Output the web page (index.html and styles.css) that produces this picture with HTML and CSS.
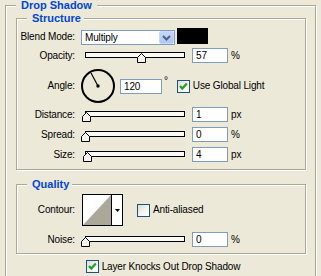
FILE: index.html
```html
<!DOCTYPE html>
<html>
<head>
<meta charset="utf-8">
<link rel="stylesheet" href="styles.css">
</head>
<body>
<section class="group outer">
  <h1 class="caption">Drop Shadow</h1>

  <section class="group sub structure">
    <h2 class="caption sub-caption">Structure</h2>

    <div class="row row-blend">
      <span class="lbl">Blend Mode:</span>
      <div class="ctl">
        <div class="combo">
          <span class="combo-text">Multiply</span>
          <span class="combo-btn"><svg width="9" height="6" viewBox="0 0 9 6"><polyline points="1,1 4.5,4.5 8,1" fill="none" stroke="#4D6185" stroke-width="2"/></svg></span>
        </div>
        <span class="swatch"></span>
      </div>
    </div>

    <div class="row row-opacity">
      <span class="lbl">Opacity:</span>
      <div class="ctl">
        <div class="slider"><span class="thumb" style="left:57%"><svg width="9" height="10" viewBox="0 0 9 10"><polygon points="4.5,0.5 8.5,4.5 8.5,9.5 0.5,9.5 0.5,4.5" fill="#F3F2EC" stroke="#000" stroke-width="1"/></svg></span></div>
        <input class="field" type="text" value="57">
        <span class="unit">%</span>
      </div>
    </div>

    <div class="row row-angle">
      <span class="lbl">Angle:</span>
      <div class="ctl ctl-center">
        <svg class="dial" width="36" height="36" viewBox="0 0 36 36">
          <circle cx="17" cy="18" r="16" fill="none" stroke="#000" stroke-width="2"/>
          <line x1="17" y1="18" x2="10" y2="5" stroke="#000" stroke-width="1.2"/>
          <circle cx="17" cy="18" r="1.7" fill="#000"/>
        </svg>
        <input class="field field-angle" type="text" value="120">
        <span class="deg">°</span>
        <label class="check-label check-global">
          <span class="check"><svg width="11" height="11" viewBox="0 0 11 11"><polyline points="2,5 4.3,7.5 8.8,2.5" fill="none" stroke="#21A121" stroke-width="2.2"/></svg></span>
          <span class="check-text">Use Global Light</span>
        </label>
      </div>
    </div>

    <div class="row row-distance">
      <span class="lbl">Distance:</span>
      <div class="ctl">
        <div class="slider"><span class="thumb" style="left:1%"><svg width="9" height="10" viewBox="0 0 9 10"><polygon points="4.5,0.5 8.5,4.5 8.5,9.5 0.5,9.5 0.5,4.5" fill="#F3F2EC" stroke="#000" stroke-width="1"/></svg></span></div>
        <input class="field" type="text" value="1">
        <span class="unit">px</span>
      </div>
    </div>

    <div class="row row-spread">
      <span class="lbl">Spread:</span>
      <div class="ctl">
        <div class="slider"><span class="thumb" style="left:0%"><svg width="9" height="10" viewBox="0 0 9 10"><polygon points="4.5,0.5 8.5,4.5 8.5,9.5 0.5,9.5 0.5,4.5" fill="#F3F2EC" stroke="#000" stroke-width="1"/></svg></span></div>
        <input class="field" type="text" value="0">
        <span class="unit">%</span>
      </div>
    </div>

    <div class="row row-size">
      <span class="lbl">Size:</span>
      <div class="ctl">
        <div class="slider"><span class="thumb" style="left:2%"><svg width="9" height="10" viewBox="0 0 9 10"><polygon points="4.5,0.5 8.5,4.5 8.5,9.5 0.5,9.5 0.5,4.5" fill="#F3F2EC" stroke="#000" stroke-width="1"/></svg></span></div>
        <input class="field" type="text" value="4">
        <span class="unit">px</span>
      </div>
    </div>
  </section>

  <section class="group sub quality">
    <h2 class="caption sub-caption">Quality</h2>

    <div class="row row-contour">
      <span class="lbl">Contour:</span>
      <div class="ctl ctl-center">
        <div class="contour">
          <svg class="contour-preview" width="28" height="30" viewBox="0 0 28 30"><polygon points="0,30 28,0 28,30" fill="#ACA899"/></svg>
          <span class="contour-arrow"><svg width="5" height="3" viewBox="0 0 5 3"><polygon points="0,0 5,0 2.5,3" fill="#000"/></svg></span>
        </div>
        <label class="check-label check-anti">
          <span class="check"></span>
          <span class="check-text">Anti-aliased</span>
        </label>
      </div>
    </div>

    <div class="row row-noise">
      <span class="lbl">Noise:</span>
      <div class="ctl">
        <div class="slider"><span class="thumb" style="left:0%"><svg width="9" height="10" viewBox="0 0 9 10"><polygon points="4.5,0.5 8.5,4.5 8.5,9.5 0.5,9.5 0.5,4.5" fill="#F3F2EC" stroke="#000" stroke-width="1"/></svg></span></div>
        <input class="field" type="text" value="0">
        <span class="unit">%</span>
      </div>
    </div>
  </section>

  <div class="row-layer">
    <label class="check-label">
      <span class="check"><svg width="11" height="11" viewBox="0 0 11 11"><polyline points="2,5 4.3,7.5 8.8,2.5" fill="none" stroke="#21A121" stroke-width="2.2"/></svg></span>
      <span class="check-text">Layer Knocks Out Drop Shadow</span>
    </label>
  </div>
</section>
</body>
</html>
```

FILE: styles.css
```css
* { box-sizing: border-box; }
html, body { margin: 0; padding: 0; }
body {
  background: #ECE9D8;
  font-family: "Liberation Sans", Arial, sans-serif;
  font-size: 10px;
  letter-spacing: -0.15px;
  color: #000;
  width: 321px;
  height: 276px;
  overflow: hidden;
}

.group {
  border: 1px solid #ACA899;
  box-shadow: inset 1px 1px 0 #fff, 1px 1px 0 #fff;
}
.outer {
  margin: 5px 5px 0;
  padding: 0 9px 14px 10px;
}
.caption {
  display: block;
  width: max-content;
  margin: -6px 0 0 0;
  padding: 0 5px;
  font-weight: bold;
  font-size: 11px;
  letter-spacing: 0;
  line-height: 11px;
  color: #0046D5;
  background: #ECE9D8;
}
.sub-caption {
  margin: -6px 0 4px 10px;
  padding: 0 3px 0 5px;
}
.structure { margin-top: 7px; padding: 0 0 7px 0; }
.quality { margin-top: 14px; padding: 0 0 6px 0; }

.row {
  display: grid;
  grid-template-columns: 58px auto;
  column-gap: 6px;
  align-items: center;
  height: 15px;
  margin-top: 5px;
}
.lbl { text-align: right; white-space: nowrap; line-height: 12px; }
.ctl { display: flex; align-items: flex-start; height: 100%; }
.ctl-center { align-items: center; }

.row-blend { height: 17px; margin-top: 0; }
.row-opacity { margin-top: 3px; }
.row-angle { height: 36px; margin-top: 5px; }
.row-distance { margin-top: 3px; }
.row-contour { height: 32px; margin-top: 0; }
.row-noise { margin-top: 6px; }

/* combo */
.combo {
  margin-top: 2px;
  width: 94px;
  height: 15px;
  border: 1px solid #7F9DB9;
  background: #fff;
  display: flex;
  align-items: center;
}
.combo-text { flex: 1; padding-left: 3px; line-height: 13px; }
.combo-btn {
  width: 15px;
  height: 13px;
  border-radius: 2px;
  border: 1px solid #C9D8FA;
  background: linear-gradient(#C6D6FB, #B0C6F5);
  display: flex;
  align-items: center;
  justify-content: center;
}
.swatch { width: 31px; height: 16px; background: #000; margin-left: 2px; }

/* slider */
.slider {
  position: relative;
  margin: 4px 7px 0 4px;
  width: 100px;
  height: 6px;
  border: 1px solid #000;
  background: #FAF9F2;
}
.thumb {
  position: absolute;
  top: 0;
  margin-left: -5px;
  width: 9px;
  height: 10px;
  display: block;
}
.thumb svg { display: block; }

.field {
  margin: 0;
  width: 36px;
  height: 15px;
  border: 1px solid #7F9DB9;
  background: #fff;
  padding: 0 0 0 3px;
  font: inherit;
  letter-spacing: inherit;
  line-height: 13px;
  color: #000;
  outline: none;
}
.unit { margin-left: 3px; line-height: 15px; }

/* angle */
.dial { display: block; flex: none; }
.field-angle { width: 42px; margin-left: 3px; }
.deg { margin-left: 2px; align-self: flex-start; margin-top: 8px; line-height: 10px; }
.check-global { margin-left: 9px; }

/* checkbox */
.check-label { display: flex; align-items: center; }
.check {
  width: 13px;
  height: 13px;
  flex: none;
  border: 1px solid #1C5180;
  background: linear-gradient(135deg, #DCDCD5 0%, #F4F4F0 55%, #fff 100%);
  display: flex;
  align-items: center;
  justify-content: center;
}
.check svg { display: block; }
.check-text { margin-left: 3px; white-space: nowrap; line-height: 12px; }

/* contour */
.contour {
  margin-left: 1px;
  width: 41px;
  height: 32px;
  border: 1px solid #000;
  background: #fff;
  display: flex;
}
.contour-preview { display: block; flex: none; }
.contour-arrow {
  flex: 1;
  border-left: 1px solid #000;
  display: flex;
  align-items: center;
  justify-content: center;
}
.contour-arrow svg { display: block; }
.check-anti { margin-left: 14px; }

.row-layer {
  display: flex;
  justify-content: center;
  align-items: center;
  height: 13px;
  margin-top: 6px;
  padding-left: 4px;
}
```
